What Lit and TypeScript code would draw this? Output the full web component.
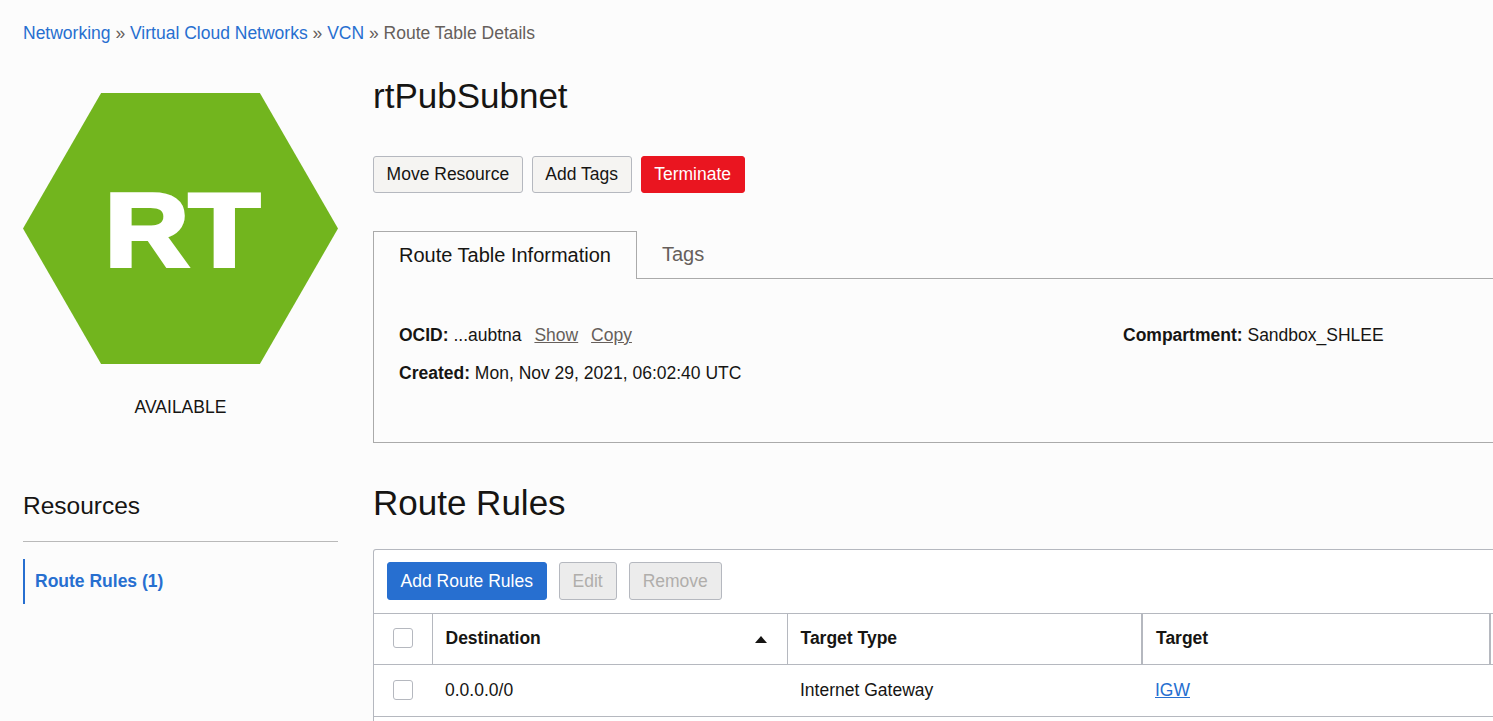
import { LitElement, html, css } from 'lit';
import { customElement } from 'lit/decorators.js';

@customElement('app-root')
export class AppRoot extends LitElement {
  static styles = css`
    :host {
      display: block;
      height: 721px;
      overflow: hidden;
      background: #fcfcfc;
      color: #161513;
      font-family: 'Liberation Sans', Arial, sans-serif;
      font-size: 17.5px;
      line-height: 22px;
    }
    a {
      color: #276fd0;
      text-decoration: none;
    }
    .crumbs {
      padding: 22px 0 0 23px;
      height: 38px;
      color: #665f5b;
    }
    .page {
      display: grid;
      grid-template-columns: 315px 1200px;
      column-gap: 35px;
      padding-left: 23px;
    }
    .hex {
      margin-top: 33px;
      width: 315px;
      height: 271px;
      display: flex;
      align-items: center;
      justify-content: center;
      background: #72b51e;
      clip-path: polygon(24.8% 0, 75.2% 0, 100% 50%, 75.2% 100%, 24.8% 100%, 0 50%);
      color: #fff;
      font-size: 104px;
      font-weight: 700;
      line-height: 1;
    }
    .hex span {
      display: block;
      transform: translate(2px, 1px) scaleX(1.12);
      -webkit-text-stroke: 4px #fff;
    }
    .state {
      margin-top: 32px;
      text-align: center;
    }
    h1 {
      margin: 0;
      font-size: 35px;
      font-weight: 400;
      line-height: 44px;
    }
    .title {
      padding-top: 14px;
    }
    .actions {
      display: flex;
      gap: 9px;
      margin-top: 38px;
    }
    .actions.table-bar {
      margin: 0;
      padding: 12px 13px;
      gap: 12px;
      height: 39px;
      border-bottom: 1px solid #b5b8bf;
    }
    button {
      height: 37px;
      padding: 0 12.6px 2px;
      border: 1px solid #b5b8bf;
      border-radius: 3px;
      background: #f5f4f2;
      color: #161513;
      font: inherit;
    }
    button.danger {
      border-color: #ea1520;
      background: #ea1520;
      color: #fff;
    }
    button.primary {
      height: 38px;
      padding-bottom: 1px;
      border-color: #276fd0;
      background: #276fd0;
      color: #fff;
    }
    button[disabled] {
      height: 38px;
      padding: 0 13px 1px;
      background: #ececec;
      color: #b0aeab;
    }
    .tabs {
      display: flex;
      margin-top: 38px;
      height: 48px;
      font-size: 20px;
      box-sizing: border-box;
      border-bottom: 1px solid #aaa;
    }
    .tab {
      padding: 12px 25px 0;
      height: 48px;
      box-sizing: border-box;
      color: #665f5b;
    }
    .tab.active {
      color: #161513;
      border: 1px solid #aaa;
      border-bottom: 0;
      background: #fcfcfc;
    }
    .panel {
      height: 164px;
      padding: 45px 25px 0;
      box-sizing: border-box;
      border: 1px solid #aaa;
      border-top: 0;
      display: grid;
      grid-template-columns: 724px 1fr;
      grid-auto-rows: 38px;
    }
    .panel b {
      font-weight: 700;
    }
    .panel a {
      color: #665f5b;
      text-decoration: underline;
      margin-left: 8px;
    }
    .resources {
      margin-top: 49px;
    }
    h2 {
      margin: 0;
      padding-bottom: 21px;
      border-bottom: 1px solid #b9b9b9;
      font-size: 24.5px;
      font-weight: 400;
      line-height: 28px;
    }
    .nav {
      display: block;
      margin-top: 17px;
      padding: 11px 10px 13px;
      height: 21px;
      border-left: 2px solid #276fd0;
      font-weight: 700;
    }
    .rules {
      padding-top: 38px;
    }
    .rules h1 {
      margin-bottom: 24px;
    }
    .card {
      min-height: 220px;
      border: 1px solid #b5b8bf;
      border-bottom: 0;
      background: #fff;
      border-radius: 3px 3px 0 0;
    }
    table {
      width: 100%;
      table-layout: fixed;
      border-collapse: collapse;
    }
    th {
      height: 50px;
      padding: 0 13px 2px;
      box-sizing: border-box;
      text-align: left;
      font-weight: 700;
      border-bottom: 1px solid #b5b8bf;
      border-right: 1px solid #b5b8bf;
    }
    th.wide {
      border-right-width: 2px;
    }
    td {
      height: 52px;
      padding: 0 13px 1px;
      box-sizing: border-box;
      border-bottom: 1px solid #b5b8bf;
    }
    .check {
      display: block;
      width: 18px;
      height: 18px;
      margin: 1px auto 0;
      border: 1px solid #b5b8bf;
      border-radius: 3px;
      background: #fff;
    }
    .sort {
      display: flex;
      align-items: center;
      justify-content: space-between;
    }
    .arrow {
      width: 0;
      height: 0;
      margin: 4px 7px 0 0;
      border: 6px solid transparent;
      border-top: 0;
      border-bottom: 7px solid #161513;
    }
    td a {
      text-decoration: underline;
    }
  `;

  render() {
    return html`
      <nav class="crumbs">
        <a href="#">Networking</a> » <a href="#">Virtual Cloud Networks</a> »
        <a href="#">VCN</a> » Route Table Details
      </nav>
      <div class="page">
        <div>
          <div class="hex"><span>RT</span></div>
          <div class="state">AVAILABLE</div>
        </div>
        <div>
          <h1 class="title">rtPubSubnet</h1>
          <div class="actions">
            <button>Move Resource</button>
            <button>Add Tags</button>
            <button class="danger">Terminate</button>
          </div>
          <div class="tabs">
            <div class="tab active">Route Table Information</div>
            <div class="tab">Tags</div>
          </div>
          <div class="panel">
            <div>
              <b>OCID:</b> ...aubtna <a href="#">Show</a> <a href="#">Copy</a>
            </div>
            <div><b>Compartment:</b> Sandbox_SHLEE</div>
            <div><b>Created:</b> Mon, Nov 29, 2021, 06:02:40 UTC</div>
          </div>
        </div>
        <div class="resources">
          <h2>Resources</h2>
          <a class="nav" href="#">Route Rules (1)</a>
        </div>
        <div class="rules">
          <h1>Route Rules</h1>
          <div class="card">
            <div class="actions table-bar">
              <button class="primary">Add Route Rules</button>
              <button disabled>Edit</button>
              <button disabled>Remove</button>
            </div>
            <table>
              <colgroup>
                <col style="width: 58px" />
                <col style="width: 355px" />
                <col style="width: 355px" />
                <col style="width: 348px" />
                <col />
              </colgroup>
              <thead>
                <tr>
                  <th><span class="check"></span></th>
                  <th>
                    <div class="sort">Destination<span class="arrow"></span></div>
                  </th>
                  <th class="wide">Target Type</th>
                  <th class="wide">Target</th>
                  <th></th>
                </tr>
              </thead>
              <tbody>
                <tr>
                  <td><span class="check"></span></td>
                  <td>0.0.0.0/0</td>
                  <td>Internet Gateway</td>
                  <td><a href="#">IGW</a></td>
                  <td></td>
                </tr>
              </tbody>
            </table>
          </div>
        </div>
      </div>
    `;
  }
}
